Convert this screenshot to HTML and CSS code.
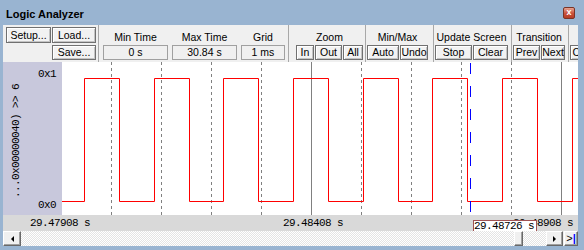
FILE: index.html
```html
<!DOCTYPE html>
<html lang="en">

<head>
    <meta charset="UTF-8">
    <title>Logic Analyzer</title>
    <link rel="stylesheet" href="styles.css">
</head>

<body>
    <div class="window">
        <div class="titlebar">
            <span class="title">Logic Analyzer</span>
            <span class="close">x</span>
        </div>

        <div class="client">
            <div class="toolbar">
                <div class="file-group">
                    <button class="btn">Setup...</button>
                    <button class="btn">Load...</button>
                    <button class="btn save">Save...</button>
                </div>
                <div class="sep"></div>

                <div class="time-group">
                    <div class="group-label">Min Time</div>
                    <div class="group-label">Max Time</div>
                    <div class="group-label">Grid</div>
                    <div class="value">0 s</div>
                    <div class="value">30.84 s</div>
                    <div class="value">1 ms</div>
                </div>
                <div class="sep"></div>

                <div class="group zoom-group">
                    <div class="group-label">Zoom</div>
                    <button class="btn">In</button>
                    <button class="btn">Out</button>
                    <button class="btn">All</button>
                </div>
                <div class="sep"></div>

                <div class="group minmax-group">
                    <div class="group-label">Min/Max</div>
                    <button class="btn">Auto</button>
                    <button class="btn">Undo</button>
                </div>
                <div class="sep"></div>

                <div class="group update-group">
                    <div class="group-label">Update Screen</div>
                    <button class="btn">Stop</button>
                    <button class="btn">Clear</button>
                </div>
                <div class="sep"></div>

                <div class="group transition-group">
                    <div class="group-label">Transition</div>
                    <button class="btn">Prev</button>
                    <button class="btn">Next</button>
                </div>
                <div class="sep"></div>

                <div class="group jump-group">
                    <div class="group-label">Jump to</div>
                    <button class="btn">Code</button>
                    <button class="btn">Trace</button>
                </div>
            </div>

            <div class="plot-row">
                <div class="signal-panel">
                    <div class="sig-name">...0x00000040) &gt;&gt; 6</div>
                    <div class="sig-range">
                        <span>0x1</span>
                        <span>0x0</span>
                    </div>
                </div>

                <svg class="plot" width="516" height="153" viewBox="0 0 516 153">
                    <!-- grid: 1 ms = 50px, every 5th line solid -->
                    <g class="grid-minor">
                        <line x1="49.5" y1="0" x2="49.5" y2="153" />
                        <line x1="99.5" y1="0" x2="99.5" y2="153" />
                        <line x1="149.5" y1="0" x2="149.5" y2="153" />
                        <line x1="199.5" y1="0" x2="199.5" y2="153" />
                        <line x1="299.5" y1="0" x2="299.5" y2="153" />
                        <line x1="349.5" y1="0" x2="349.5" y2="153" />
                        <line x1="399.5" y1="0" x2="399.5" y2="153" />
                        <line x1="449.5" y1="0" x2="449.5" y2="153" />
                    </g>
                    <g class="grid-major">
                        <line x1="249.5" y1="0" x2="249.5" y2="153" />
                        <line x1="499.5" y1="0" x2="499.5" y2="153" />
                    </g>

                    <path class="signal"
                        d="M0 139.5 H22.5 V16.5 H57.5 V139.5 H92.5 V16.5 H127.5 V139.5 H161.5 V16.5 H196.5 V139.5 H231.5 V16.5 H266.5 V139.5 H301.5 V16.5 H336.5 V139.5 H370.5 V16.5 H405.5 V139.5 H440.5 V16.5 H475.5 V139.5 H510.5 V16.5 H516" />

                    <line class="cursor" x1="408.5" y1="1" x2="408.5" y2="153" />
                </svg>
            </div>

            <svg class="axis" width="575" height="16" viewBox="0 0 575 16">
                <text class="axis-text" x="27" y="11">29.47908 s</text>
                <text class="axis-text" x="280" y="11">29.48408 s</text>
                <text class="axis-text" x="510" y="11">29.48908 s</text>
                <rect class="tip-box" x="470.5" y="5.5" width="63" height="14" />
                <text class="axis-text" x="471" y="14">29.48726 s</text>
            </svg>

            <div class="hscroll">
                <div class="sb-btn"><span class="arrow-left"></span></div>
                <div class="track">
                    <div class="thumb" style="left: 493px"></div>
                </div>
                <div class="sb-btn"><span class="arrow-right"></span></div>
                <div class="sb-btn sb-end">&gt;<span class="end-bar">|</span></div>
            </div>
        </div>
    </div>
</body>

</html>
```

FILE: styles.css
```css
body {
    margin: 0;
    font-family: "Liberation Sans", Arial, sans-serif;
    font-size: 10.5px;
}

.window {
    width: 584px;
    height: 250px;
    box-sizing: border-box;
    padding-bottom: 4px;
    background-color: #99b4d1;
    display: flex;
    flex-direction: column;
    overflow: hidden;
}

.titlebar {
    height: 25px;
    flex: none;
    display: flex;
    justify-content: space-between;
    padding: 0 9px 0 6px;
}

.title {
    font-weight: bold;
    font-size: 11px;
    line-height: 12px;
    margin-top: 8px;
}

.close {
    margin-top: 7px;
    width: 12px;
    height: 12px;
    box-sizing: border-box;
    border: 1px solid #7a3426;
    border-radius: 2px;
    background: linear-gradient(#e6a391, #c9503a 55%, #b63c24);
    color: white;
    font-weight: bold;
    font-size: 9px;
    line-height: 9px;
    text-align: center;
}

.client {
    flex: 1;
    min-height: 0;
    margin: 0 6px 0 3px;
    display: flex;
    flex-direction: column;
    background-color: #f0f0f0;
}

/* toolbar */

.toolbar {
    height: 37px;
    flex: none;
    box-sizing: border-box;
    padding-top: 2px;
    display: flex;
    overflow: hidden;
}

.sep {
    width: 1px;
    flex: none;
    margin-top: -2px;
    background-color: #a8a8a8;
}

.btn {
    width: 100%;
    height: 15px;
    box-sizing: border-box;
    margin: 0;
    padding: 0;
    font: inherit;
    line-height: 13px;
    color: #000;
    white-space: nowrap;
    overflow: hidden;
    border: 1px solid #707070;
    background-color: #f2f2f2;
    box-shadow: inset 1px 1px #fff, inset -1px -1px #c4c4c4;
}

.file-group {
    display: grid;
    grid-template-columns: 45px 44px;
    grid-template-rows: 16px 15px;
    column-gap: 1px;
    row-gap: 2px;
    margin: 0 2px 0 3px;
}

.file-group .btn {
    height: 100%;
}

.file-group .save {
    grid-column: 2;
}

.group-label {
    grid-column: 1 / -1;
    align-self: end;
    padding-bottom: 2px;
    line-height: 12px;
    text-align: center;
    white-space: nowrap;
}

.time-group {
    display: grid;
    grid-template-columns: 65px 65px 44px;
    grid-template-rows: 18px 15px;
    column-gap: 4px;
    margin: 0 3px 0 4px;
}

.time-group .group-label {
    grid-column: auto;
}

.value {
    height: 15px;
    box-sizing: border-box;
    border: 1px solid #a0a0a0;
    background-color: #f0f0f0;
    line-height: 13px;
    text-align: center;
}

.group {
    display: grid;
    grid-template-rows: 18px 15px;
    column-gap: 1px;
}

.zoom-group {
    grid-template-columns: 18px 27px 20px;
    margin: 0 2px 0 7px;
}

.minmax-group {
    grid-template-columns: 32px 28px;
    margin: 0 5px 0 1px;
}

.update-group {
    grid-template-columns: 37px 35px;
    margin: 0 3px 0 1px;
}

.transition-group {
    grid-template-columns: 27px 24px;
    margin: 0 3px 0 1px;
}

.jump-group {
    grid-template-columns: 30px 32px;
    margin-left: 1px;
}

/* signal plot */

.plot-row {
    height: 153px;
    flex: none;
    display: flex;
}

.signal-panel {
    width: 59px;
    flex: none;
    box-sizing: border-box;
    padding: 6px 6px 3px 7px;
    background-color: #c8c8dc;
    display: flex;
    font-family: "Liberation Mono", "DejaVu Sans Mono", monospace;
    font-size: 11px;
    letter-spacing: -0.6px;
}

.sig-name {
    writing-mode: vertical-rl;
    transform: rotate(180deg);
    align-self: flex-end;
    margin-bottom: 14px;
    line-height: 13px;
    white-space: nowrap;
}

.sig-range {
    flex: 1;
    display: flex;
    flex-direction: column;
    justify-content: space-between;
    align-items: flex-end;
    line-height: 13px;
}

.plot {
    display: block;
    background-color: #fff;
}

.grid-minor line {
    stroke: #808080;
    stroke-width: 1;
    stroke-dasharray: 3 3;
}

.grid-major line {
    stroke: #808080;
    stroke-width: 1;
}

.signal {
    fill: none;
    stroke: #ff0000;
    stroke-width: 1;
}

.cursor {
    stroke: #0000ff;
    stroke-width: 1;
    stroke-dasharray: 11 12;
}

.axis {
    display: block;
    flex: none;
    background-color: #d9d9d9;
}

.axis-text {
    font-family: "Liberation Mono", "DejaVu Sans Mono", monospace;
    font-size: 11px;
    letter-spacing: -0.6px;
    fill: #000;
}

.tip-box {
    fill: #fff;
    stroke: #a05252;
    stroke-width: 1;
}

/* horizontal scrollbar */

.hscroll {
    height: 15px;
    flex: none;
    display: flex;
}

.sb-btn {
    width: 18px;
    flex: none;
    box-sizing: border-box;
    display: flex;
    align-items: center;
    justify-content: center;
    background-color: #f0f0f0;
    border: 1px solid;
    border-color: #fff #696969 #696969 #fff;
    box-shadow: inset -1px -1px #a0a0a0;
}

.sb-btn + .sb-end {
    width: 14px;
    margin-left: 1px;
    font-size: 11px;
    line-height: 13px;
}

.hscroll .track + .sb-btn {
    width: 17px;
}

.end-bar {
    color: #0000ff;
    font-weight: bold;
}

.arrow-left {
    width: 0;
    height: 0;
    border-top: 3px solid transparent;
    border-bottom: 3px solid transparent;
    border-right: 3px solid #000;
}

.arrow-right {
    width: 0;
    height: 0;
    border-top: 3px solid transparent;
    border-bottom: 3px solid transparent;
    border-left: 3px solid #000;
}

.track {
    flex: 1;
    position: relative;
    background-color: #fff;
    background-image: repeating-conic-gradient(#e4e4e4 0 25%, #fff 0 50%);
    background-size: 2px 2px;
}

.thumb {
    position: absolute;
    top: 0;
    bottom: 0;
    width: 9px;
    box-sizing: border-box;
    background-color: #f0f0f0;
    border: 1px solid;
    border-color: #fff #696969 #696969 #fff;
    box-shadow: inset -1px -1px #a0a0a0;
}
```
